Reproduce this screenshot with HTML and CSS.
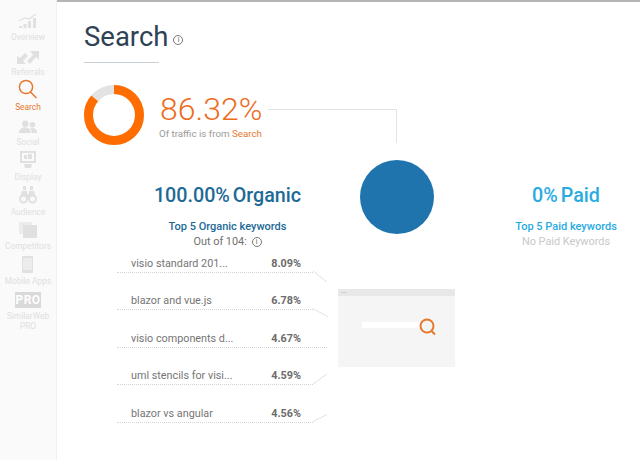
FILE: index.html
```html
<!DOCTYPE html>
<html lang="en">
<head>
<meta charset="UTF-8">
<title>Search</title>
<link rel="stylesheet" href="styles.css">
</head>
<body>
<div class="page">
  <nav class="sidebar">
    <a class="nav-item">
      <svg width="20" height="16" viewBox="0 0 20 16"><path class="ic" d="M1 13h3v2H1zM5.500 11h3v4h-3zM10 8h3v7h-3zM15 5h3v10h-3z"/><path class="ln" d="M1 8l6-3 4 1 7-5"/></svg>
      <span>Overview</span>
    </a>
    <a class="nav-item">
      <svg width="22" height="13" viewBox="0 0 22 13"><path class="ic" d="M22 0v9l-3-3-6 7-3-3 6-6-3-4zM0 13V5l3 2 5-5 3 3-5 5 3 3z"/></svg>
      <span>Referrals</span>
    </a>
    <a class="nav-item active">
      <svg width="20" height="20" viewBox="0 0 20 20"><circle class="lens" cx="8" cy="8" r="6.600"/><path class="lens" d="m12.500 13 6 6"/></svg>
      <span>Search</span>
    </a>
    <a class="nav-item">
      <svg width="20" height="14" viewBox="0 0 22 15"><circle class="ic" cx="8" cy="4" r="3.600"/><circle class="ic" cx="16" cy="5" r="3"/><path class="ic" d="M1 14c0-4 3-6 7-6s6 2 6 6zM15 14c0-2-.5-4-2-5 3-1 8 0 8 5z"/></svg>
      <span>Social</span>
    </a>
    <a class="nav-item">
      <svg width="18" height="19" viewBox="0 0 18 19"><path class="ic" fill-rule="evenodd" d="M1 1h16v12H1zM3 3v8h12V3z"/><path class="ic" d="M5 5h3v4H5zM9 4h4v5H9zM5 14h8l-1 4H6z"/></svg>
      <span>Display</span>
    </a>
    <a class="nav-item">
      <svg width="18" height="18" viewBox="0 0 18 18"><path class="ic" d="M4 0h3v4H4zM11 0h3v4h-3zM3 5h5v3h2V5h5l2 7H1z"/><circle class="ic" cx="4.500" cy="13" r="4.500"/><circle class="ic" cx="13.500" cy="13" r="4.500"/><circle class="hole" cx="4.500" cy="13" r="2.500"/><circle class="hole" cx="13.500" cy="13" r="2.500"/></svg>
      <span>Audience</span>
    </a>
    <a class="nav-item">
      <svg width="18" height="16" viewBox="0 0 18 16"><path class="ic-soft" d="M0 0h13v12H0z"/><path class="ic" d="M4 3h14v13H4z"/></svg>
      <span>Competitors</span>
    </a>
    <a class="nav-item">
      <svg width="11" height="17" viewBox="0 0 11 17"><path class="ic" fill-rule="evenodd" d="M1 0h9a1 1 0 0 1 1 1v15a1 1 0 0 1-1 1H1a1 1 0 0 1-1-1V1a1 1 0 0 1 1-1zM1 2v12h9V2z"/><path class="ic-soft" d="M1 2h9v12H1z"/></svg>
      <span>Mobile Apps</span>
    </a>
    <a class="nav-item nav-item-tall">
      <b class="pro">PRO</b>
      <span>SimilarWeb<br>PRO</span>
    </a>
  </nav>

  <main class="content">
    <svg class="links" width="583" height="458" viewBox="0 0 583 458">
      <path d="M211 107.500H339.500V141"/>
      <path d="M256 269l14 11M256 306.700l15 8M256 382l14-10M256 419.600l14-7"/>
    </svg>

    <header class="title-block">
      <h1>Search<i class="info info-big">i</i></h1>
    </header>

    <section class="summary">
      <svg class="donut" width="60" height="60" viewBox="0 0 60 60">
        <circle class="donut-bg" cx="30" cy="30" r="25.500"/>
        <circle class="donut-val" cx="30" cy="30" r="25.500" pathLength="100" stroke-dasharray="86.32 100" transform="rotate(-90 30 30)"/>
      </svg>
      <div>
        <div class="share">86.32%</div>
        <div class="share-note">Of traffic is from <em>Search</em></div>
      </div>
    </section>

    <section class="split">
      <div class="col organic">
        <h2><span>100.00%</span> Organic</h2>
        <h3>Top 5 Organic keywords</h3>
        <p class="out-of">Out of 104: <i class="info">i</i></p>
        <ul class="keywords">
          <li><span>visio standard 201...</span><b>8.09%</b></li>
          <li><span>blazor and vue.js</span><b>6.78%</b></li>
          <li><span>visio components d...</span><b>4.67%</b></li>
          <li><span>uml stencils for visi...</span><b>4.59%</b></li>
          <li><span>blazor vs angular</span><b>4.56%</b></li>
        </ul>
      </div>

      <div class="col middle">
        <div class="circle"></div>
        <div class="browser">
          <div class="browser-bar">•••</div>
          <div class="browser-body">
            <div class="search-box"></div>
            <svg class="search-icon" width="18" height="18" viewBox="0 0 18 18"><circle cx="8" cy="8" r="6.500"/><path d="m12.500 13 3.500 3.500"/></svg>
          </div>
        </div>
      </div>

      <div class="col paid">
        <h2><span>0%</span> Paid</h2>
        <h3>Top 5 Paid keywords</h3>
        <p class="none">No Paid Keywords</p>
      </div>
    </section>
  </main>
</div>
</body>
</html>
```

FILE: styles.css
```css
* {
  box-sizing: border-box;
}
body {
  margin: 0;
  background: #fff;
  font-family: Roboto, "Liberation Sans", sans-serif;
  overflow: hidden;
}
.page {
  display: flex;
  width: 640px;
  height: 460px;
}

/* left nav */
.sidebar {
  width: 57px;
  flex: none;
  padding-top: 7.200px;
  background: #fafafa;
  border-right: 1px solid #f0f0f0;
  display: flex;
  flex-direction: column;
  align-items: center;
}
.nav-item {
  display: flex;
  flex-direction: column;
  align-items: center;
  justify-content: flex-end;
  flex: none;
  height: 34.900px;
  font-size: 8.400px;
  line-height: 10px;
  color: #e0e0e0;
  text-align: center;
  white-space: nowrap;
}
.nav-item-tall {
  height: 44.900px;
}
.nav-item svg {
  margin-bottom: 3px;
}
.nav-item.active {
  color: #e8772e;
}
.ic {
  fill: #e0e0e0;
}
.ic-soft {
  fill: #ececec;
}
.ln {
  fill: none;
  stroke: #e0e0e0;
  stroke-width: 1.200;
}
.hole {
  fill: #fafafa;
}
.lens {
  fill: none;
  stroke: #e8772e;
  stroke-width: 1.500;
}
.pro {
  display: block;
  width: 26px;
  height: 16px;
  margin-bottom: 3px;
  background: #d9d9d9;
  color: #fff;
  font-size: 12px;
  line-height: 16px;
  font-weight: 700;
  letter-spacing: .5px;
}

/* main area */
.content {
  position: relative;
  flex: 1;
  border-top: 2px solid #b5b5b5;
  padding: 0 0 0 27px;
}
.links {
  position: absolute;
  left: 0;
  top: 0;
  fill: none;
  stroke: #e3e3e3;
}
.title-block {
  width: 75px;
  height: 61px;
  padding-top: 19px;
  border-bottom: 1px solid #c9d0d6;
}
h1 {
  margin: 0;
  font-size: 27.500px;
  line-height: 32px;
  font-weight: 400;
  color: #2f4255;
  white-space: nowrap;
}
.info {
  display: inline-block;
  width: 10px;
  height: 10px;
  border: 1px solid #777;
  border-radius: 50%;
  font-size: 7px;
  line-height: 8px;
  font-style: normal;
  text-align: center;
  color: #666;
  vertical-align: 1px;
}
.info-big {
  vertical-align: 4px;
  margin-left: 5px;
}
.summary {
  position: relative;
  display: flex;
  align-items: center;
  gap: 15px;
  margin-top: 22px;
}
.share {
  margin-left: 1px;
  font-size: 32px;
  line-height: 36px;
  font-weight: 300;
  color: #ee6c1e;
}
.share-note {
  font-size: 9.750px;
  line-height: 13px;
  color: #9a9a9a;
}
.share-note em {
  font-style: normal;
  color: #e8772e;
}
.donut {
  display: block;
}
.donut circle {
  fill: none;
  stroke-width: 9;
}
.donut-bg {
  stroke: #e3e3e3;
}
.donut-val {
  stroke: #ff6d00;
}

/* three columns */
.split {
  position: relative;
  display: grid;
  grid-template-columns: 221px 118px 184px;
  margin: 14px 0 0 33px;
}
.col {
  text-align: center;
}
h2 {
  margin: 25px 0 0;
  font-size: 19.700px;
  line-height: 24px;
  font-weight: 500;
}
h2 span {
  margin-right: -2px;
}
h3 {
  margin: 12px 0 0;
  font-size: 11px;
  line-height: 14px;
  font-weight: 500;
}
.organic {
  color: #1d6a96;
}
.paid {
  padding-left: 36px;
  color: #29abe2;
}
.out-of, .none {
  margin: 1px 0 0;
  font-size: 10.900px;
  line-height: 14px;
}
.out-of {
  color: #707070;
}
.out-of .info {
  margin-left: 2px;
}
.none {
  color: #c8c8c8;
}
.keywords {
  list-style: none;
  margin: -14px 0 0;
  padding: 0;
}
.keywords li {
  display: flex;
  justify-content: space-between;
  width: 196px;
  height: 17px;
  margin-top: 20.600px;
  padding: 1px 12px 0 14px;
  border-bottom: 1px dotted #d5d5d5;
  font-size: 10.800px;
  line-height: 14px;
  color: #757575;
  text-align: left;
}
.keywords li:nth-child(3) {
  width: 210px;
  padding-right: 26px;
}
.keywords b {
  font-weight: 700;
  color: #6b6b6b;
}
.middle {
  margin-top: 1px;
  display: flex;
  flex-direction: column;
  align-items: center;
}
.circle {
  flex: none;
  width: 74px;
  height: 74px;
  border-radius: 50%;
  background: #1f74ae;
}
.browser {
  flex: none;
  align-self: flex-start;
  width: 117px;
  height: 78px;
  margin-top: 55px;
  background: #f5f5f5;
  text-align: left;
}
.browser-bar {
  height: 7px;
  padding-left: 3px;
  background: #e8e8e8;
  font-size: 6px;
  line-height: 7px;
  color: #bbb;
}
.browser-body {
  display: flex;
  align-items: center;
  height: 58px;
  padding-left: 24px;
}
.search-box {
  width: 58px;
  height: 6px;
  background: #fff;
}
.search-icon {
  fill: none;
  stroke: #e8772e;
  stroke-width: 2;
  margin: 3px 0 0 -1px;
}
```
